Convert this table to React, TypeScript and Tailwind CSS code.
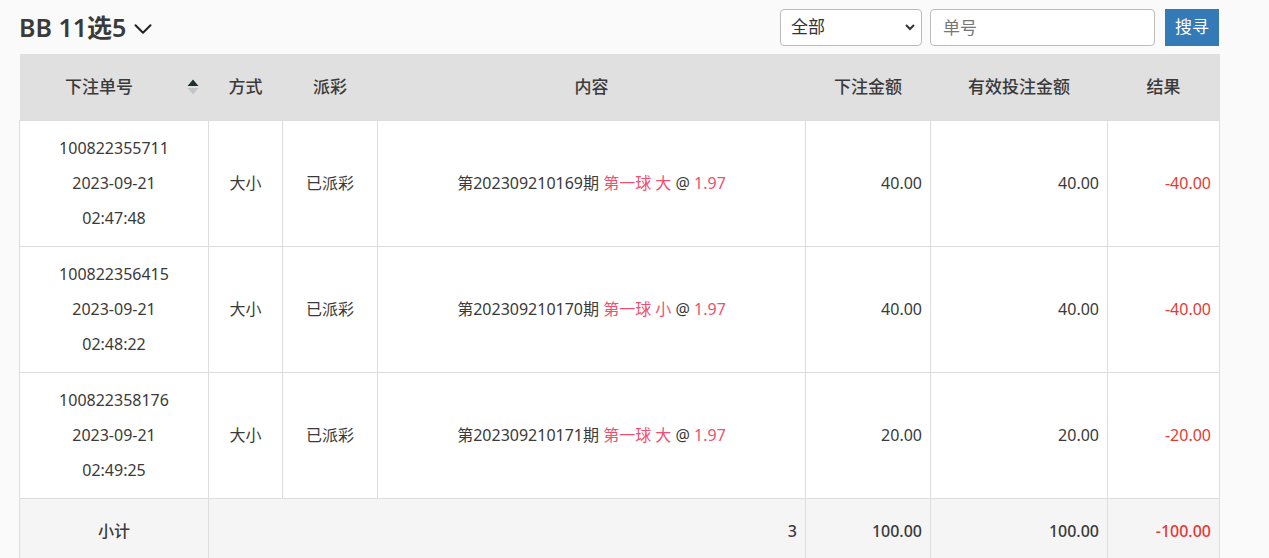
import { ChevronDown } from "lucide-react";

type Bet = {
  id: string;
  date: string;
  time: string;
  kind: string;
  status: string;
  period: string;
  pick: string;
  odds: string;
  amount: string;
  valid: string;
  result: string;
};

const bets: Bet[] = [
  { id: "100822355711", date: "2023-09-21", time: "02:47:48", kind: "大小", status: "已派彩", period: "第202309210169期", pick: "第一球 大", odds: "1.97", amount: "40.00", valid: "40.00", result: "-40.00" },
  { id: "100822356415", date: "2023-09-21", time: "02:48:22", kind: "大小", status: "已派彩", period: "第202309210170期", pick: "第一球 小", odds: "1.97", amount: "40.00", valid: "40.00", result: "-40.00" },
  { id: "100822358176", date: "2023-09-21", time: "02:49:25", kind: "大小", status: "已派彩", period: "第202309210171期", pick: "第一球 大", odds: "1.97", amount: "20.00", valid: "20.00", result: "-20.00" },
];

const font = { fontFamily: '"Noto Sans", "Noto Sans CJK SC", sans-serif' };

function SortIcon() {
  return (
    <svg width="12" height="18" viewBox="0 0 12 18" className="absolute right-[10px] top-1/2 -translate-y-1/2">
      <path d="M6 1.5 L11.5 8 L0.5 8 Z" fill="#17332f" />
      <path d="M6 16.5 L11.5 10 L0.5 10 Z" fill="#c4c4c4" />
    </svg>
  );
}

export default function App() {
  return (
    <div className="min-h-[558px] bg-[#fafafa] text-[#3a3a3a]" style={font}>
      <div className="w-[1200px] ml-[19px]">
        <div className="h-[54px] flex items-center justify-between">
          <div className="flex items-center gap-[2px] text-[25px] font-semibold text-[#3a3a3a] leading-none">
            <span>BB 11选5</span>
            <ChevronDown size={30} strokeWidth={1.6} className="text-[#222] mt-[4px]" />
          </div>
          <div className="flex items-center">
            <div className="relative w-[142px] h-[37px]">
              <select className="w-full h-full rounded-[4px] border border-[#bbb] bg-white pl-[10px] text-[17px] text-[#333] appearance-none outline-none">
                <option>全部</option>
              </select>
              <svg width="12" height="8" viewBox="0 0 12 8" className="absolute right-[6px] top-1/2 -translate-y-1/2 pointer-events-none">
                <path d="M2 2 L6 6 L10 2" fill="none" stroke="#333" strokeWidth="2" />
              </svg>
            </div>
            <input
              placeholder="单号"
              className="ml-[8px] w-[225px] h-[37px] rounded-[4px] border border-[#bbb] bg-white px-[12px] text-[17px] placeholder:text-[#777] outline-none"
            />
            <button className="ml-[10px] w-[54px] h-[37px] bg-[#337ab7] text-white text-[17px]">搜寻</button>
          </div>
        </div>

        <table className="w-[1200px] table-fixed border-collapse text-[16px]">
          <colgroup>
            <col className="w-[189px]" />
            <col className="w-[74px]" />
            <col className="w-[95px]" />
            <col className="w-[428px]" />
            <col className="w-[125px]" />
            <col className="w-[177px]" />
            <col className="w-[112px]" />
          </colgroup>
          <thead>
            <tr className="bg-[#e0e0e0] h-[66px] text-[17px]">
              <th className="relative pr-[30px] font-medium">下注单号<SortIcon /></th>
              <th className="font-medium">方式</th>
              <th className="font-medium">派彩</th>
              <th className="font-medium">内容</th>
              <th className="font-medium">下注金额</th>
              <th className="font-medium">有效投注金额</th>
              <th className="font-medium">结果</th>
            </tr>
          </thead>
          <tbody className="bg-white">
            {bets.map((b) => (
              <tr key={b.id} className="h-[126px]">
                <td className="border border-[#ddd] text-center leading-[35px] py-[9px]">
                  <div>{b.id}</div>
                  <div>{b.date}</div>
                  <div>{b.time}</div>
                </td>
                <td className="border border-[#ddd] text-center">{b.kind}</td>
                <td className="border border-[#ddd] text-center">{b.status}</td>
                <td className="border border-[#ddd] text-center">
                  {b.period} <span className="text-[#f0506e]">{b.pick}</span> @ <span className="text-[#f0506e]">{b.odds}</span>
                </td>
                <td className="border border-[#ddd] text-right pr-[8px]">{b.amount}</td>
                <td className="border border-[#ddd] text-right pr-[8px]">{b.valid}</td>
                <td className="border border-[#ddd] text-right pr-[8px] text-[#e53935]">{b.result}</td>
              </tr>
            ))}
            <tr className="h-[66px] bg-[#f5f5f5] font-medium">
              <td className="border border-[#ddd] text-center">小计</td>
              <td colSpan={3} className="border border-[#ddd] text-right pr-[8px]">3</td>
              <td className="border border-[#ddd] text-right pr-[8px]">100.00</td>
              <td className="border border-[#ddd] text-right pr-[8px]">100.00</td>
              <td className="border border-[#ddd] text-right pr-[8px] text-[#e53935]">-100.00</td>
            </tr>
          </tbody>
        </table>
      </div>
    </div>
  );
}
